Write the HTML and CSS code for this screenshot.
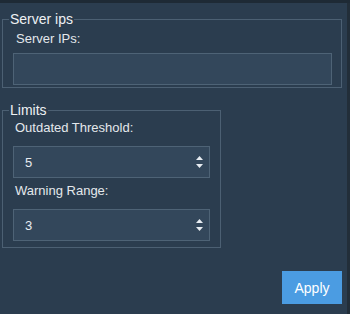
FILE: index.html
```html
<!DOCTYPE html>
<html lang="en">
<head>
    <meta charset="UTF-8">
    <title>Settings</title>
    <link rel="stylesheet" href="styles.css">
</head>
<body>
    <div class="topbar"></div>
    <div class="window">
        <div class="content">
            <fieldset class="group group-wide">
                <legend>Server ips</legend>
                <label class="field-label">Server IPs:</label>
                <div class="text-input"></div>
            </fieldset>

            <fieldset class="group group-narrow">
                <legend>Limits</legend>
                <label class="field-label">Outdated Threshold:</label>
                <div class="spinbox">
                    <span>5</span>
                    <svg class="arrows" width="7" height="14" viewBox="0 0 7 14">
                        <path d="M3.5 1 L7 5 L0 5 Z" fill="#e8edf2"/>
                        <path d="M0 9 L7 9 L3.5 13 Z" fill="#e8edf2"/>
                    </svg>
                </div>
                <label class="field-label">Warning Range:</label>
                <div class="spinbox">
                    <span>3</span>
                    <svg class="arrows" width="7" height="14" viewBox="0 0 7 14">
                        <path d="M3.5 1 L7 5 L0 5 Z" fill="#e8edf2"/>
                        <path d="M0 9 L7 9 L3.5 13 Z" fill="#e8edf2"/>
                    </svg>
                </div>
            </fieldset>

            <div class="actions">
                <button class="apply">Apply</button>
            </div>
        </div>
        <div class="edge"></div>
    </div>
</body>
</html>
```

FILE: styles.css
```css
body { margin: 0; padding: 0; background: #2b3d4f; color: #e4e8ec; font-family: "Liberation Sans", Arial, sans-serif; font-size: 13px; }
.topbar { height: 3px; background: #1e2a35; }
.window { display: flex; height: 311px; }
.content { flex-grow: 1; display: flex; flex-direction: column; }
.edge { width: 3px; background: #222e39; }

.group { border: 1px solid #4c6073; margin: 0 0 0 2px; padding: 0; }
.group legend { margin-left: 6px; padding: 0 1px; font-size: 14px; line-height: 16px; color: #eef1f4; }
.group-wide { width: 338px; margin-top: 8px; padding-bottom: 2px; }
.group-narrow { width: 217px; margin-top: 14px; padding-bottom: 1px; }

.field-label { display: block; padding-left: 13px; line-height: 16px; margin-top: 4px; }
.group-narrow .field-label { margin-top: 2px; padding-left: 12px; }

.text-input { margin: 6px 9px 0 10px; height: 30px; background: #33475b; border: 1px solid #4e6376; }

.spinbox { margin: 10px 10px 5px 10px; height: 30px; background: #33475b; border: 1px solid #4e6376; display: flex; align-items: center; justify-content: space-between; padding: 0 6px 0 11px; }
.spinbox span { color: #e8edf2; }
.arrows { display: block; }

.actions { display: flex; justify-content: flex-end; margin-top: auto; margin-bottom: 10px; padding-right: 5px; }
.apply { width: 60px; height: 33px; background: #4b9ce2; color: #ffffff; border: none; font-family: "Liberation Sans", Arial, sans-serif; font-size: 14px; padding: 0; }
```
